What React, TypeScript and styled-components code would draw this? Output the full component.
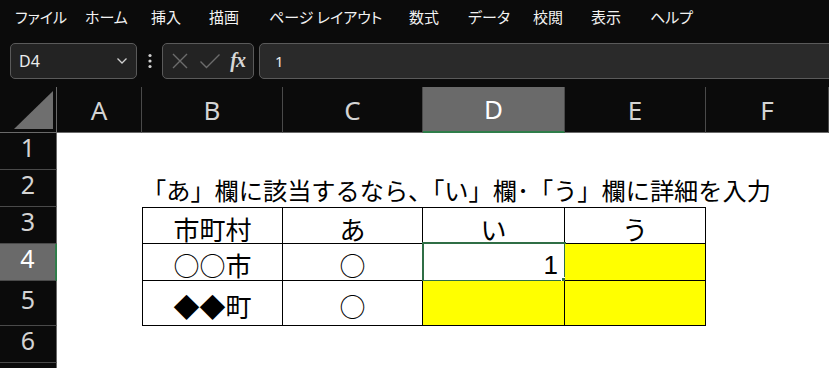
import React from "react";
import styled, { createGlobalStyle } from "styled-components";

const Global = createGlobalStyle`
  html, body { margin: 0; padding: 0; background: #0b0b0b; overflow: hidden; }
  body { font-family: "Noto Sans CJK JP", "Noto Sans", sans-serif; }
`;

const Page = styled.div`
  width: 829px;
  height: 368px;
  overflow: hidden;
  background: #0b0b0b;
  display: flex;
  flex-direction: column;
  & > * { flex: none; }
`;

const MenuBar = styled.div`
  height: 33px;
  display: flex;
  align-items: center;
  padding-left: 15px;
  color: #f2f2f2;
  font-size: 15px;
  font-feature-settings: "palt";
`;

const MenuItem = styled.span<{ $w: number }>`
  width: ${(p) => p.$w}px;
  flex: none;
  white-space: nowrap;
  line-height: 20px;
`;

const FormulaRow = styled.div`
  margin-top: 10px;
  height: 36px;
  display: flex;
  align-items: stretch;
`;

const Box = styled.div`
  box-sizing: border-box;
  border: 1px solid #5a5a5a;
  border-radius: 5px;
  background: #232323;
  display: flex;
  align-items: center;
`;

const NameBox = styled(Box)`
  margin-left: 10px;
  width: 127px;
  padding: 0 8px 0 8px;
  justify-content: space-between;
  color: #ececec;
  font-family: "Noto Sans", sans-serif;
  font-size: 16px;
`;

const Dots = styled.div`
  width: 25px;
  display: flex;
  align-items: center;
  justify-content: center;
`;

const FxBox = styled(Box)`
  width: 92px;
  padding: 0 8px;
  justify-content: space-between;
`;

const Fx = styled.span`
  font-family: "Liberation Serif", "DejaVu Serif", serif;
  font-style: italic;
  font-weight: bold;
  font-size: 20px;
  color: #d6d6d6;
  letter-spacing: -1px;
  margin-bottom: 2px;
`;

const FormulaInput = styled(Box)`
  flex: 1;
  margin-left: 5px;
  margin-right: -10px;
  background: #2a2a2a;
  padding-left: 15px;
  color: #ececec;
  font-family: "Noto Sans", sans-serif;
  font-size: 15px;
`;

const Sheet = styled.div`
  margin-top: 8px;
  display: grid;
  grid-template-columns: 57px 85px 141px 140px 142px 141px 1fr;
  grid-template-rows: 46px 37px 37px 37px 37px 45px 37px 37px;
  background: #ffffff;
`;

const Corner = styled.div`
  background: #0b0b0b;
  border-right: 1px solid #6a6a6a;
  border-bottom: 1px solid #6a6a6a;
  box-sizing: border-box;
  display: flex;
  align-items: flex-end;
  justify-content: flex-end;
  padding: 0 3px 3px 0;
`;

const Triangle = styled.div`
  width: 39px;
  height: 38px;
  background: #6f6f6f;
  clip-path: polygon(100% 0, 100% 100%, 0 100%);
`;

const ColHeader = styled.div<{ $sel?: boolean }>`
  box-sizing: border-box;
  background: ${(p) => (p.$sel ? "#6a6a6a" : "#0b0b0b")};
  border-right: 1px solid #4a4a4a;
  border-bottom: ${(p) => (p.$sel ? "2px solid #2f7d4a" : "1px solid #6a6a6a")};
  color: ${(p) => (p.$sel ? "#ffffff" : "#d4d4d4")};
  font-family: "Noto Sans", sans-serif;
  font-size: 26px;
  display: flex;
  align-items: center;
  justify-content: center;
`;

const RowHeader = styled.div<{ $sel?: boolean }>`
  box-sizing: border-box;
  background: ${(p) => (p.$sel ? "#6a6a6a" : "#0b0b0b")};
  border-right: ${(p) => (p.$sel ? "2px solid #2f7d4a" : "1px solid #6a6a6a")};
  border-bottom: 1px solid #4a4a4a;
  color: ${(p) => (p.$sel ? "#ffffff" : "#d4d4d4")};
  font-family: "Noto Sans", sans-serif;
  font-size: 25px;
  line-height: 1;
  display: flex;
  align-items: center;
  justify-content: center;
  padding-bottom: 8px;
`;

const Cell = styled.div<{
  $tbl?: boolean;
  $top?: boolean;
  $left?: boolean;
  $fill?: string;
  $right?: boolean;
}>`
  position: relative;
  box-sizing: border-box;
  background: ${(p) => p.$fill || "#ffffff"};
  border-right: ${(p) => (p.$tbl ? "1.5px solid #000" : "none")};
  border-bottom: ${(p) => (p.$tbl ? "1.5px solid #000" : "none")};
  border-top: ${(p) => (p.$top ? "1.5px solid #000" : "none")};
  border-left: ${(p) => (p.$left ? "1.5px solid #000" : "none")};
  color: #000;
  font-family: "Noto Sans CJK JP", sans-serif;
  font-size: 26px;
  line-height: 1;
  display: flex;
  align-items: center;
  justify-content: ${(p) => (p.$right ? "flex-end" : "center")};
  padding: 6px 6px 0 6px;
`;

const Num = styled.span`
  font-family: "Liberation Sans", Arial, sans-serif;
  font-size: 26px;
`;

const TitleCell = styled.div`
  grid-column: span 5;
  display: flex;
  align-items: center;
  white-space: nowrap;
  color: #000;
  font-family: "Noto Sans CJK JP", sans-serif;
  font-size: 24.2px;
  padding-top: 1px;
`;

const Selection = styled.div`
  position: absolute;
  left: -1px;
  top: -2px;
  right: -2px;
  bottom: -2px;
  border: 2px solid #2f6e45;
  pointer-events: none;
`;

const Handle = styled.div`
  position: absolute;
  right: -5px;
  bottom: -5px;
  width: 6px;
  height: 6px;
  background: #2f6e45;
  border: 1px solid #fff;
`;

const menu: [string, number][] = [
  ["ファイル", 70],
  ["ホーム", 66],
  ["挿入", 58],
  ["描画", 60],
  ["ページ レイアウト", 140],
  ["数式", 59],
  ["データ", 65],
  ["校閲", 58],
  ["表示", 59],
  ["ヘルプ", 60],
];

const cols = ["A", "B", "C", "D", "E", "F"];
const Y = "#ffff00";

function Chevron() {
  return (
    <svg width="12" height="8" viewBox="0 0 12 8">
      <polyline points="1.5,1.5 6,6 10.5,1.5" fill="none" stroke="#d0d0d0" strokeWidth="1.3" />
    </svg>
  );
}

function VDots() {
  return (
    <svg width="4" height="16" viewBox="0 0 4 16">
      <circle cx="2" cy="2.5" r="1.6" fill="#d0d0d0" />
      <circle cx="2" cy="8" r="1.6" fill="#d0d0d0" />
      <circle cx="2" cy="13.5" r="1.6" fill="#d0d0d0" />
    </svg>
  );
}

function XIcon() {
  return (
    <svg width="18" height="18" viewBox="0 0 18 18">
      <path d="M2 2 L16 16 M16 2 L2 16" stroke="#6c6c6c" strokeWidth="1.4" fill="none" />
    </svg>
  );
}

function CheckIcon() {
  return (
    <svg width="22" height="18" viewBox="0 0 22 18">
      <path d="M1.5 9.5 L7.5 15.5 L20.5 2.5" stroke="#6c6c6c" strokeWidth="1.4" fill="none" />
    </svg>
  );
}

export default function App() {
  return (
    <Page>
      <Global />
      <MenuBar>
        {menu.map(([t, w]) => (
          <MenuItem key={t} $w={w}>
            {t}
          </MenuItem>
        ))}
      </MenuBar>
      <FormulaRow>
        <NameBox>
          <span>D4</span>
          <Chevron />
        </NameBox>
        <Dots>
          <VDots />
        </Dots>
        <FxBox>
          <XIcon />
          <CheckIcon />
          <Fx>fx</Fx>
        </FxBox>
        <FormulaInput>1</FormulaInput>
      </FormulaRow>
      <Sheet>
        <Corner>
          <Triangle />
        </Corner>
        {cols.map((c) => (
          <ColHeader key={c} $sel={c === "D"}>
            {c}
          </ColHeader>
        ))}

        <RowHeader>1</RowHeader>
        {cols.map((c) => (
          <Cell key={"1" + c} />
        ))}

        <RowHeader>2</RowHeader>
        <Cell />
        <TitleCell>「あ」欄に該当するなら、「い」欄･「う」欄に詳細を入力</TitleCell>

        <RowHeader>3</RowHeader>
        <Cell />
        <Cell $tbl $top $left>市町村</Cell>
        <Cell $tbl $top>あ</Cell>
        <Cell $tbl $top>い</Cell>
        <Cell $tbl $top>う</Cell>
        <Cell />

        <RowHeader $sel>4</RowHeader>
        <Cell />
        <Cell $tbl $left>○○市</Cell>
        <Cell $tbl>○</Cell>
        <Cell $tbl $right>
          <Num>1</Num>
          <Selection>
            <Handle />
          </Selection>
        </Cell>
        <Cell $tbl $fill={Y} />
        <Cell />

        <RowHeader>5</RowHeader>
        <Cell />
        <Cell $tbl $left>◆◆町</Cell>
        <Cell $tbl>○</Cell>
        <Cell $tbl $fill={Y} />
        <Cell $tbl $fill={Y} />
        <Cell />

        <RowHeader>6</RowHeader>
        {cols.map((c) => (
          <Cell key={"6" + c} />
        ))}

        <RowHeader>7</RowHeader>
        {cols.map((c) => (
          <Cell key={"7" + c} />
        ))}
      </Sheet>
    </Page>
  );
}
